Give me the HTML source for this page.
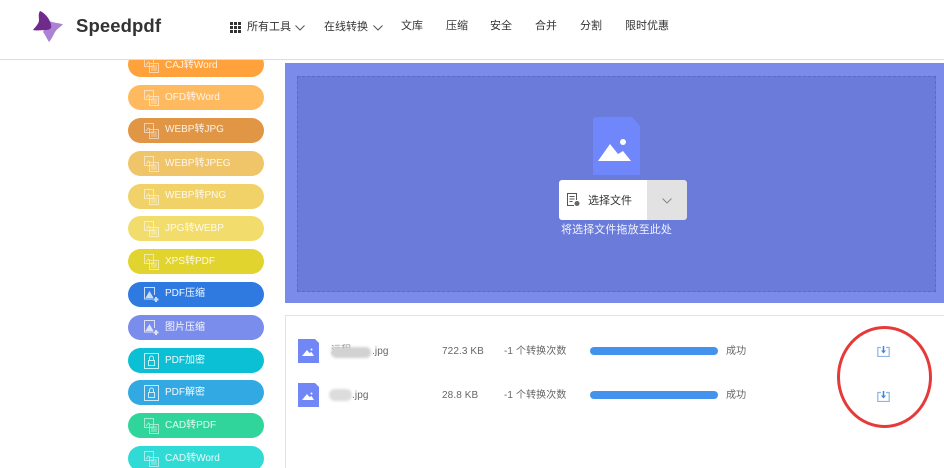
<!DOCTYPE html>
<html lang="zh"><head><meta charset="utf-8"><title>Speedpdf</title>
<style>
html,body{margin:0;padding:0;background:#fff;width:944px;height:468px;overflow:hidden}
#w{position:relative;width:944px;height:468px;overflow:hidden;font-family:"Liberation Sans","Noto Sans CJK SC",sans-serif;color:#333;background:#fff}
.a{position:absolute;white-space:nowrap}
.nav{top:18px;font-size:11px;line-height:16px;color:#333}
.pill{position:absolute;left:128px;width:136px;height:25px;border-radius:13px;color:#fff;font-size:10px;line-height:26px}
.pill span{position:absolute;left:37px;top:0;opacity:.88}
.pill svg{position:absolute;left:16px;top:5px;opacity:.55}
.t{font-size:10px;line-height:14px;color:#666;letter-spacing:.1px}
.bar{position:absolute;left:590px;width:128px;height:8px;border-radius:4px;background:#4393ee}
</style></head><body><div id="w">
<svg width="0" height="0" style="position:absolute">
<symbol id="c" viewBox="0 0 15 16"><g fill="none" stroke="#fff"><path d="M.5.500h9v9h-9z"/><path d="M2 8l2.500-3 2 2M5.500 6.500h9v9h-9z"/><path d="M7 9h6M7 11h6M7 13h6"/></g></symbol>
<symbol id="z" viewBox="0 0 15 16"><g fill="none" stroke="#fff"><path d="M9 12H.5V.5h10V8"/><path d="M2 11l3.500-6 3.500 6" fill="#fff"/><path d="M12 10v5M9.500 12.500h5" stroke-width="2"/></g></symbol>
<symbol id="l" viewBox="0 0 15 16"><g fill="none" stroke="#fff"><path d="M.5.500h14v15H.500z"/><rect x="4.500" y="7.500" width="6" height="5"/><path d="M5.500 7.500V5a2 2 0 0 1 4 0v2.500"/></g></symbol>
</svg>

<!-- sidebar -->
<div class="pill" style="top:52px;background:#ffa23c"><svg width="15" height="16"><use href="#c"/></svg><span style="top:1px">CAJ转Word</span></div>
<div class="pill" style="top:85px;background:#ffb95f"><svg width="15" height="16"><use href="#c"/></svg><span>OFD转Word</span></div>
<div class="pill" style="top:118px;background:#e09644"><svg width="15" height="16"><use href="#c"/></svg><span style="top:-1px">WEBP转JPG</span></div>
<div class="pill" style="top:151px;background:#f0c468"><svg width="15" height="16"><use href="#c"/></svg><span>WEBP转JPEG</span></div>
<div class="pill" style="top:184px;background:#f1d268"><svg width="15" height="16"><use href="#c"/></svg><span style="top:-1px">WEBP转PNG</span></div>
<div class="pill" style="top:216px;background:#f1dc6c"><svg width="15" height="16"><use href="#c"/></svg><span>JPG转WEBP</span></div>
<div class="pill" style="top:249px;background:#e2d42e"><svg width="15" height="16"><use href="#c"/></svg><span>XPS转PDF</span></div>
<div class="pill" style="top:282px;background:#2e7ae0"><svg width="15" height="16" style="opacity:.75"><use href="#z"/></svg><span style="top:-1px;opacity:.95">PDF压缩</span></div>
<div class="pill" style="top:315px;background:#7a8cec"><svg width="15" height="16" style="opacity:.75"><use href="#z"/></svg><span style="opacity:.95">图片压缩</span></div>
<div class="pill" style="top:348px;background:#0bc0d4"><svg width="15" height="16" style="opacity:.75"><use href="#l"/></svg><span style="opacity:.95">PDF加密</span></div>
<div class="pill" style="top:380px;background:#32a9e2"><svg width="15" height="16" style="opacity:.75"><use href="#l"/></svg><span style="opacity:.95">PDF解密</span></div>
<div class="pill" style="top:413px;background:#30d59c"><svg width="15" height="16"><use href="#c"/></svg><span>CAD转PDF</span></div>
<div class="pill" style="top:446px;background:#30dbd6"><svg width="15" height="16"><use href="#c"/></svg><span>CAD转Word</span></div>

<!-- header -->
<div class="a" style="left:0;top:0;width:944px;height:60px;background:#fff;border-bottom:1px solid #ddd;box-sizing:border-box"></div>
<svg class="a" style="left:32px;top:11px" width="33" height="32" viewBox="0 0 33 32">
<path d="M17 10C22 12 28 12 31 13.500C28 16 25 18 23 21C21 25 19 29 17 31C15 28 14 25 11 21Z" fill="#ab82d4"/>
<path d="M8 0C13 2 18 8 19 14C20 17 18 19 14 19C9 19 4 20 1 19C3 16 7 13 7 9C7 6 6 3 8 0Z" fill="#6f2a8c"/>
</svg>
<div class="a" style="left:76px;top:14px;font-size:18.500px;line-height:24px;font-weight:bold;color:#333;letter-spacing:.1px">Speedpdf</div>
<svg class="a" style="left:230px;top:22px" width="11" height="11" viewBox="0 0 11 11" fill="#333"><path d="M0 0h3v3H0zM4 0h3v3H4zM8 0h3v3H8zM0 4h3v3H0zM4 4h3v3H4zM8 4h3v3H8zM0 8h3v3H0zM4 8h3v3H4zM8 8h3v3H8z"/></svg>
<div class="a nav" style="left:247px;top:19px">所有工具</div>
<svg class="a" style="left:295px;top:25px" width="10" height="6" viewBox="0 0 10 6" fill="none" stroke="#555"><path d="M.5.500 5 5 9.500.500"/></svg>
<div class="a nav" style="left:324px;top:19px">在线转换</div>
<svg class="a" style="left:373px;top:25px" width="10" height="6" viewBox="0 0 10 6" fill="none" stroke="#555"><path d="M.5.500 5 5 9.500.500"/></svg>
<div class="a nav" style="left:401px">文库</div>
<div class="a nav" style="left:446px">压缩</div>
<div class="a nav" style="left:490px">安全</div>
<div class="a nav" style="left:535px">合并</div>
<div class="a nav" style="left:580px">分割</div>
<div class="a nav" style="left:625px">限时优惠</div>

<!-- upload panel -->
<div class="a" style="left:285px;top:63px;width:659px;height:240px;background:#7a8bea"></div>
<div class="a" style="left:297px;top:76px;width:639px;height:216px;background:#6a7bd9;border:1px dashed #5a6ac4;box-sizing:border-box"></div>
<svg class="a" style="left:593px;top:117px" width="47" height="58" viewBox="0 0 47 58">
<path d="M2 0H39L47 9V58H0V2Z" fill="#7087fb"/>
<circle cx="30" cy="25" r="3" fill="#fff"/>
<path d="M5 44 17 27 25 37 30 34 38 44Z" fill="#fff"/>
</svg>
<div class="a" style="left:559px;top:180px;width:88px;height:40px;background:#fff;border-radius:3px 0 0 3px"></div>
<div class="a" style="left:647px;top:180px;width:40px;height:40px;background:#e2e2e2;border-radius:0 3px 3px 0"></div>
<svg class="a" style="left:566px;top:192px" width="15" height="15" viewBox="0 0 15 15" fill="none" stroke="#555"><path d="M8 13.500H1.500V1.500h9V8M3.500 4.500h5M3.500 7h5M3.500 9.500h3"/><circle cx="11" cy="11.500" r="2.500" fill="#666" stroke="none"/></svg>
<div class="a" style="left:588px;top:193px;font-size:11px;line-height:16px;color:#333">选择文件</div>
<svg class="a" style="left:662px;top:198px" width="10" height="6" viewBox="0 0 10 6" fill="none" stroke="#888"><path d="M.5.500 5 5 9.500.500"/></svg>
<div class="a" style="left:561px;top:222px;font-size:11px;line-height:16px;color:#f2f4ff;letter-spacing:.1px">将选择文件拖放至此处</div>

<!-- file list -->
<div class="a" style="left:285px;top:315px;width:670px;height:170px;border:1px solid #e3e3e3;box-sizing:border-box;background:#fff"></div>

<svg class="a" style="left:298px;top:339px" width="21" height="24" viewBox="0 0 21 24"><path d="M0 0H17L21 4V24H0Z" fill="#7087f5"/><circle cx="13.500" cy="10.500" r="1" fill="#fff"/><path d="M4 17 9 11 11.500 14 13.500 13 16 17Z" fill="#fff"/></svg>
<div class="a t" style="left:331px;top:344px;color:#888">远程</div>
<div class="a" style="left:331px;top:347px;width:40px;height:11px;border-radius:5px;background:#d2d2d2;filter:blur(1.200px)"></div>
<div class="a t" style="left:372px;top:345px">.jpg</div>
<div class="a t" style="left:442px;top:345px">722.3 KB</div>
<div class="a t" style="left:504px;top:345px">-1 个转换次数</div>
<div class="bar" style="top:347px"></div>
<div class="a t" style="left:726px;top:345px">成功</div>

<svg class="a" style="left:298px;top:383px" width="21" height="24" viewBox="0 0 21 24"><path d="M0 0H17L21 4V24H0Z" fill="#7087f5"/><circle cx="13.500" cy="10.500" r="1" fill="#fff"/><path d="M4 17 9 11 11.500 14 13.500 13 16 17Z" fill="#fff"/></svg>
<div class="a" style="left:329px;top:389px;width:23px;height:12px;border-radius:6px;background:#dcdcdc;filter:blur(1.200px)"></div>
<div class="a t" style="left:352px;top:389px">.jpg</div>
<div class="a t" style="left:442px;top:389px">28.8 KB</div>
<div class="a t" style="left:504px;top:389px">-1 个转换次数</div>
<div class="bar" style="top:391px"></div>
<div class="a t" style="left:726px;top:389px">成功</div>

<svg class="a" style="left:877px;top:346px" width="13" height="11" viewBox="0 0 13 11" fill="none" stroke="#8fb4e6" stroke-width="1.200"><path d="M4 1.500H.8v9h11.400v-9H9"/><path d="M6.500 0v5" stroke="#3f86e0" stroke-width="1.500"/><path d="M4 4.500h5L6.500 7.500Z" fill="#3f86e0" stroke="none"/></svg>
<svg class="a" style="left:877px;top:391px" width="13" height="11" viewBox="0 0 13 11" fill="none" stroke="#8fb4e6" stroke-width="1.200"><path d="M4 1.500H.8v9h11.400v-9H9"/><path d="M6.500 0v5" stroke="#3f86e0" stroke-width="1.500"/><path d="M4 4.500h5L6.500 7.500Z" fill="#3f86e0" stroke="none"/></svg>

<svg class="a" style="left:830px;top:320px" width="110" height="112" viewBox="0 0 110 112" fill="none"><ellipse cx="54.500" cy="57" rx="46" ry="49.500" stroke="#e53a3a" stroke-width="3"/></svg>
</div></body></html>
